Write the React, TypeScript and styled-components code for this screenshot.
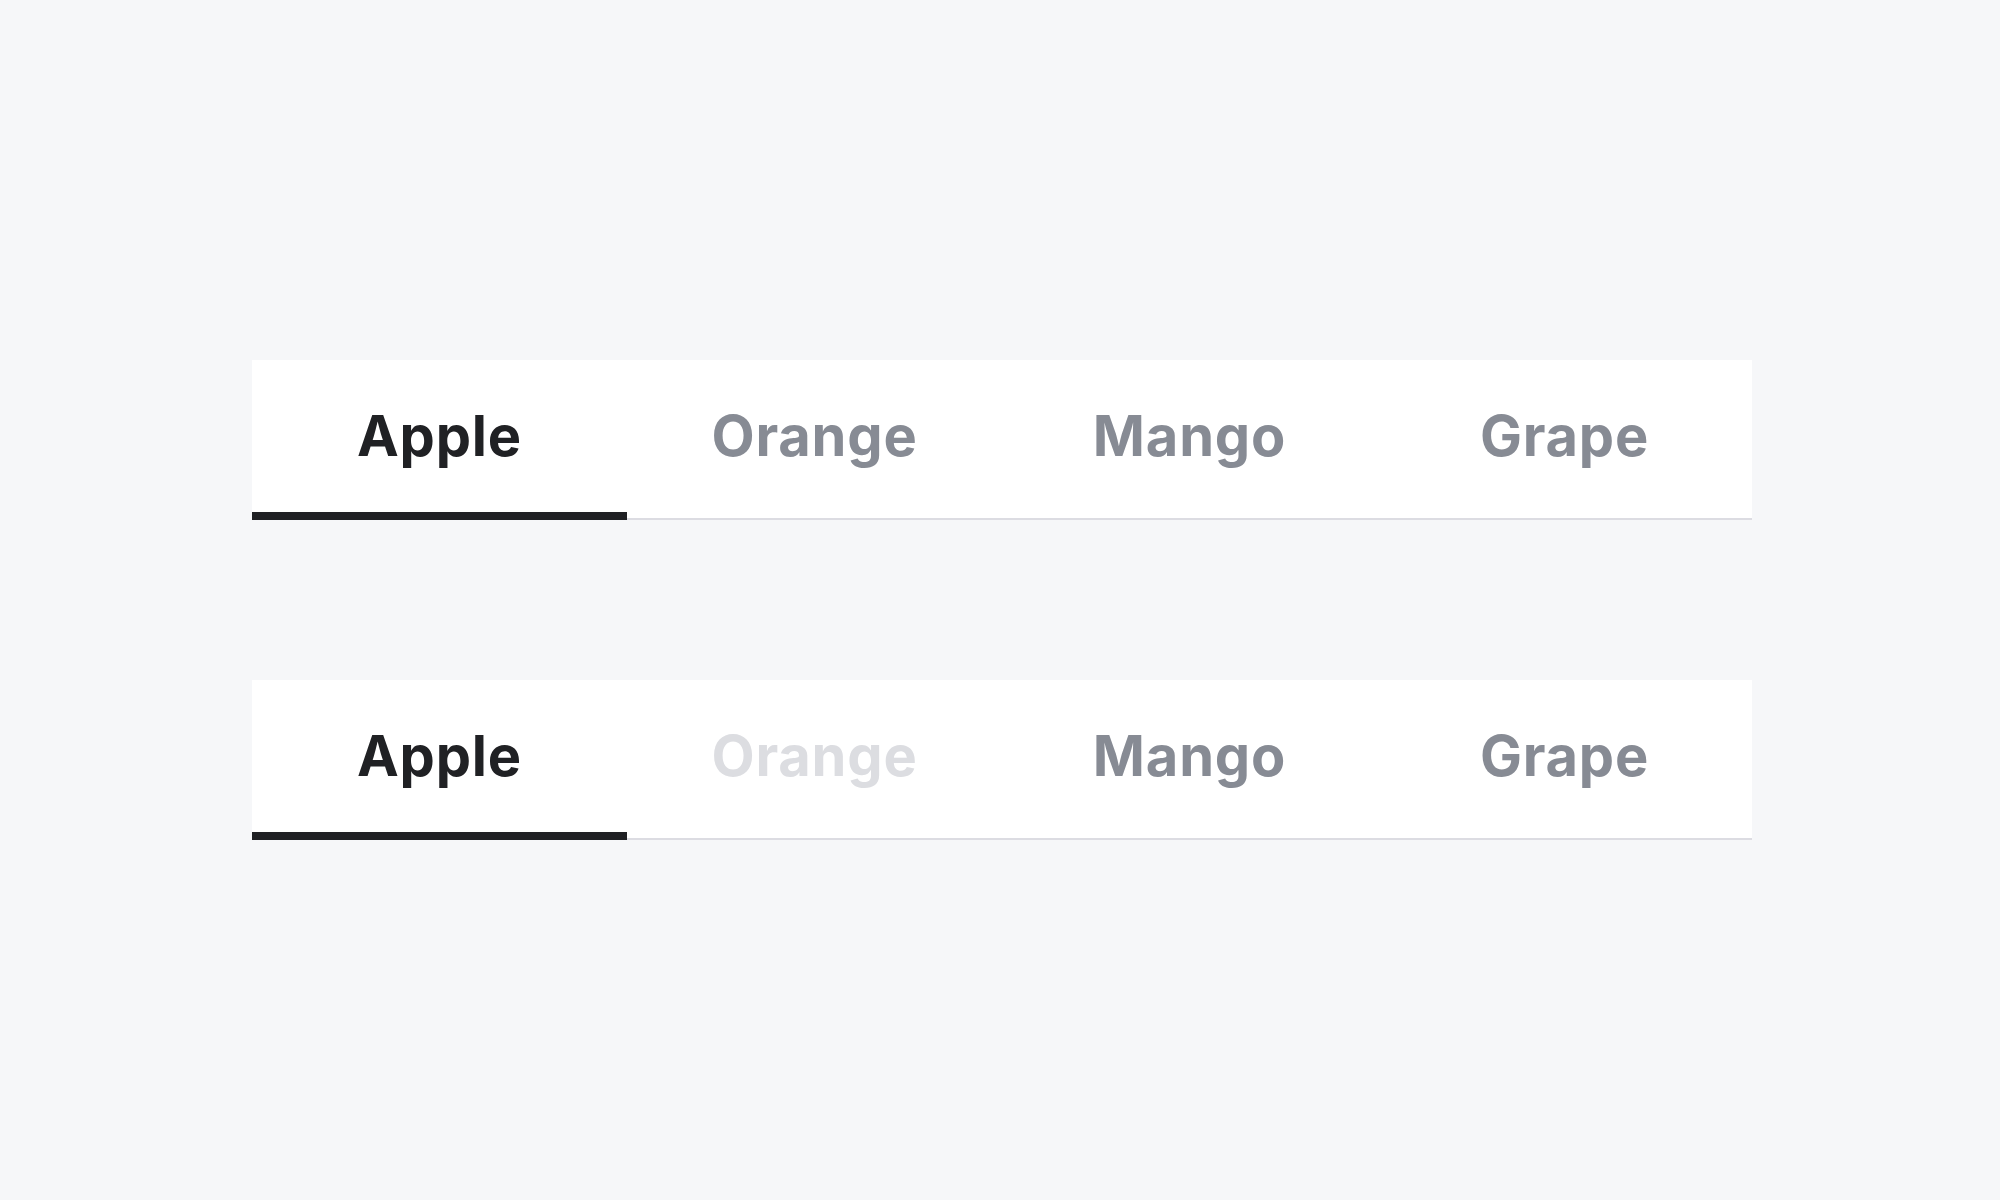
import React, { useState } from "react";
import styled, { createGlobalStyle } from "styled-components";

const Global = createGlobalStyle`
  html, body { margin: 0; padding: 0; background: #f6f7f9; }
  body { font-family: Inter, "Noto Sans", sans-serif; }
`;

const Page = styled.main`
  min-height: 1200px;
  box-sizing: border-box;
  display: flex;
  flex-direction: column;
  align-items: center;
  justify-content: center;
  gap: 160px;
  padding-left: 4px;
`;

const TabList = styled.div`
  position: relative;
  width: 1500px;
  height: 160px;
  box-sizing: border-box;
  display: grid;
  grid-template-columns: repeat(4, 1fr);
  background: #ffffff;
  border-bottom: 2px solid #dcdce2;
`;

const Tab = styled.button<{ $active?: boolean }>`
  appearance: none;
  border: none;
  background: transparent;
  margin: 0;
  padding: 0 0 6px;
  font-family: Inter, "Noto Sans", sans-serif;
  font-size: 56px;
  font-weight: 700;
  letter-spacing: 0.8px;
  color: ${(p) => (p.$active ? "#202124" : "#878b94")};
  cursor: pointer;
  display: flex;
  align-items: center;
  justify-content: center;
  &:disabled {
    color: #dcdde1;
    cursor: default;
  }
`;

const Indicator = styled.span`
  position: absolute;
  left: 0;
  bottom: -2px;
  height: 8px;
  background: #202124;
  transition: transform 0.2s;
`;

const fruits = ["Apple", "Orange", "Mango", "Grape"];

function Tabs({ disabled }: { disabled?: number }) {
  const [active, setActive] = useState(0);
  const w = 100 / fruits.length;
  return (
    <TabList role="tablist">
      {fruits.map((f, i) => (
        <Tab
          key={f}
          role="tab"
          $active={i === active}
          disabled={i === disabled}
          onClick={() => setActive(i)}
        >
          {f}
        </Tab>
      ))}
      <Indicator style={{ width: `${w}%`, left: `${active * w}%` }} />
    </TabList>
  );
}

export default function App() {
  return (
    <>
      <Global />
      <Page>
        <Tabs />
        <Tabs disabled={1} />
      </Page>
    </>
  );
}
